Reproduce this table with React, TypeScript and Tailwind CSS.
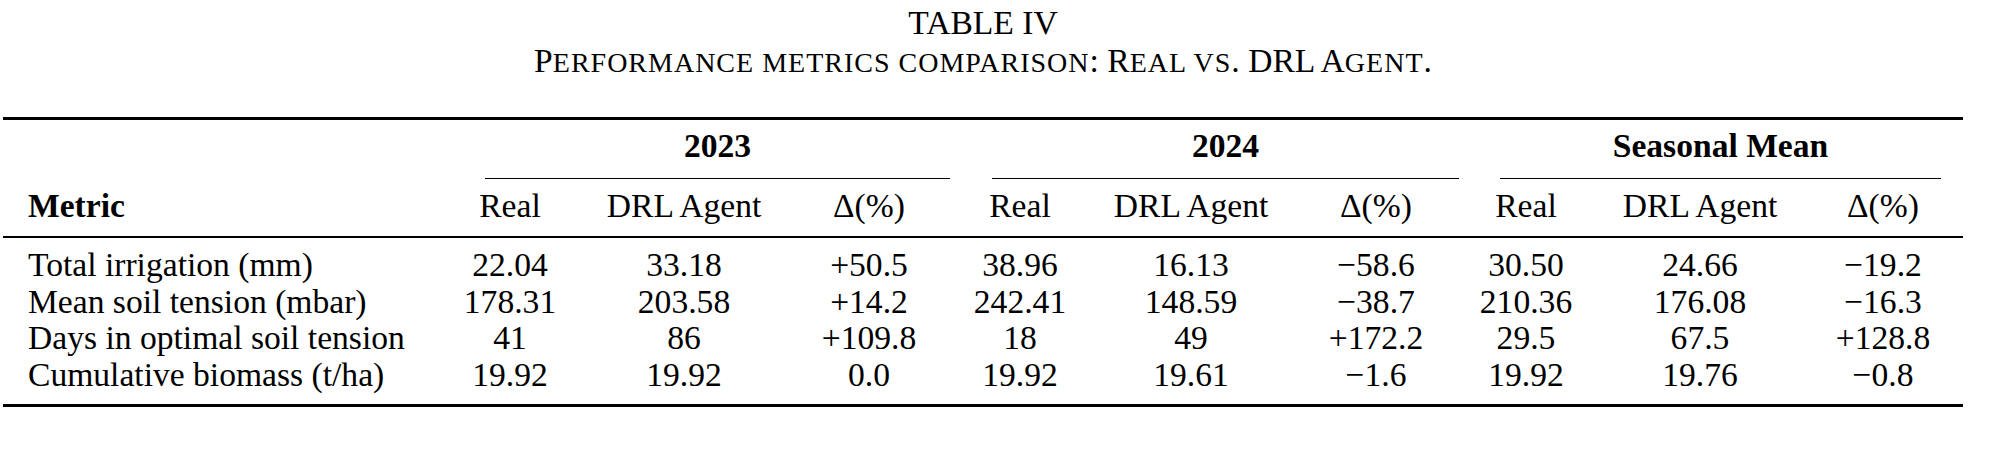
const groups = [
  { label: '2023', rule: 'ml-[35px] -mr-[10px]' },
  { label: '2024', rule: 'ml-[52px] mr-[11px]' },
  { label: 'Seasonal Mean', rule: 'ml-[30px] mr-[7px]' },
];

const subHeads = ['Real', 'DRL Agent', 'Δ(%)'];

const rows = [
  ['Total irrigation (mm)', '22.04', '33.18', '+50.5', '38.96', '16.13', '−58.6', '30.50', '24.66', '−19.2'],
  ['Mean soil tension (mbar)', '178.31', '203.58', '+14.2', '242.41', '148.59', '−38.7', '210.36', '176.08', '−16.3'],
  ['Days in optimal soil tension', '41', '86', '+109.8', '18', '49', '+172.2', '29.5', '67.5', '+128.8'],
  ['Cumulative biomass (t/ha)', '19.92', '19.92', '0.0', '19.92', '19.61', '−1.6', '19.92', '19.76', '−0.8'],
];

const cols = 'grid grid-cols-[447px_120px_228px_142px_160px_182px_188px_112px_236px_130px]';

function Sc({ children }: { children: string }) {
  // small caps, LaTeX style
  return <span className="text-[28px] tracking-[1px] uppercase">{children}</span>;
}

export default function App() {
  return (
    <div className="w-[2000px] h-[450px] bg-white text-black font-['Liberation_Serif','Times_New_Roman',serif] text-[33.6px]">
      <div className="ml-[3px] w-[1960px]">
        {/* caption */}
        <div className="pt-[3.7px] text-center leading-[38px]">
          <div>TABLE IV</div>
          <div>
            P<Sc>erformance metrics comparison</Sc>: R<Sc>eal vs</Sc>. DRL A<Sc>gent</Sc>.
          </div>
        </div>

        <div className="mt-[35.3px] border-y-[3px] border-black">
          {/* header */}
          <div className="border-b-2 border-black">
            <div className={cols}>
              <div />
              {groups.map((g) => (
                <div key={g.label} className="col-span-3">
                  <div className={`${g.rule} pt-[8.3px] pb-[13px] border-b border-black text-center font-bold leading-[36.7px]`}>
                    {g.label}
                  </div>
                </div>
              ))}
            </div>
            <div className={`${cols} pt-[9.3px] pb-[11px] leading-[36.7px]`}>
              <div className="pl-[25px] font-bold">Metric</div>
              {groups.map((g) =>
                subHeads.map((h) => (
                  <div key={g.label + h} className="text-center">
                    {h}
                  </div>
                )),
              )}
            </div>
          </div>

          {/* body */}
          <div className="pt-[9px] pb-[10px] leading-[36.7px]">
            {rows.map((r) => (
              <div key={r[0]} className={cols}>
                <div className="pl-[25px] whitespace-nowrap">{r[0]}</div>
                {r.slice(1).map((v, i) => (
                  <div key={i} className="text-center">
                    {v}
                  </div>
                ))}
              </div>
            ))}
          </div>
        </div>
      </div>
    </div>
  );
}
